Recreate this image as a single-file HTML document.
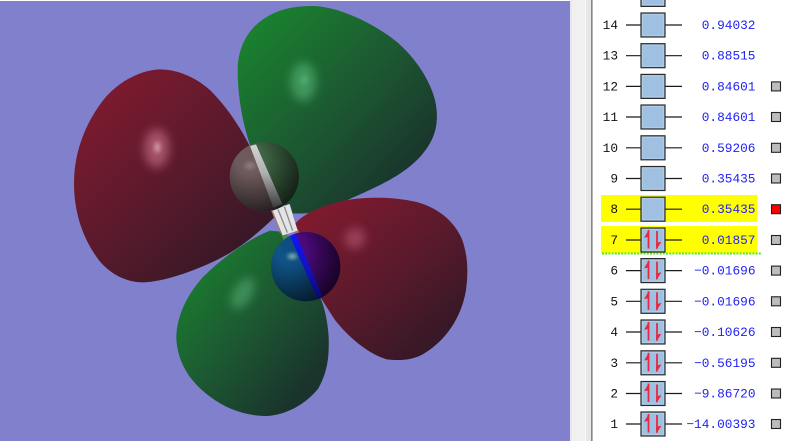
<!DOCTYPE html>
<html><head><meta charset="utf-8"><style>
html,body{margin:0;padding:0;background:#fff;width:800px;height:441px;overflow:hidden}
svg{display:block}
.n{font:12.8px "Liberation Mono",monospace;fill:#111;text-anchor:end}
.v{font:12.8px "Liberation Mono",monospace;fill:#2222f4;text-anchor:end}
</style></head><body>
<svg width="800" height="441" viewBox="0 0 800 441" xmlns="http://www.w3.org/2000/svg">
<defs>
<linearGradient id="g" x1="0.1" y1="0.1" x2="0.85" y2="0.85"><stop offset="0" stop-color="#1a802e"/><stop offset="0.5" stop-color="#1c5a32"/><stop offset="1" stop-color="#1a332c"/></linearGradient>
<linearGradient id="r" x1="0.15" y1="0.1" x2="0.85" y2="0.9"><stop offset="0" stop-color="#7d1a2e"/><stop offset="0.5" stop-color="#5a1a2c"/><stop offset="1" stop-color="#341826"/></linearGradient>
<linearGradient id="c" gradientUnits="userSpaceOnUse" x1="517" y1="570" x2="709" y2="490"><stop offset="0" stop-color="#6e5a5c"/><stop offset="0.5" stop-color="#6e5a5c"/><stop offset="0.5" stop-color="#3f6544"/><stop offset="1" stop-color="#3a5e40"/></linearGradient>
<linearGradient id="nn" gradientUnits="userSpaceOnUse" x1="641" y1="840" x2="833" y2="760"><stop offset="0" stop-color="#10588c"/><stop offset="0.5" stop-color="#0e4c80"/><stop offset="0.5" stop-color="#4e0a80"/><stop offset="1" stop-color="#3e0864"/></linearGradient>
<radialGradient id="shade" cx="0.3" cy="0.25" r="0.85"><stop offset="0.25" stop-color="#000" stop-opacity="0"/><stop offset="1" stop-color="#000" stop-opacity="0.72"/></radialGradient>
<linearGradient id="bandc" x1="0" y1="0" x2="0" y2="1"><stop offset="0" stop-color="#d4d4d4"/><stop offset="0.45" stop-color="#b0b0b0"/><stop offset="1" stop-color="#3a3a3a"/></linearGradient>
<linearGradient id="bandn" x1="0" y1="0" x2="0" y2="1"><stop offset="0" stop-color="#1414f4"/><stop offset="0.55" stop-color="#1212c0"/><stop offset="1" stop-color="#08086c"/></linearGradient>
<filter id="b" x="-60%" y="-60%" width="220%" height="220%"><feGaussianBlur stdDeviation="14"/></filter>
<filter id="b2" x="-60%" y="-60%" width="220%" height="220%"><feGaussianBlur stdDeviation="6"/></filter>
<g id="box">
<rect x="641" y="-12" width="24" height="24" fill="#9fc0e0" stroke="#2a2a2a" stroke-width="1.2"/>
<rect x="642.5" y="-10.500" width="21" height="21" fill="none" stroke="#b4d0ea" stroke-width="0.8"/>
</g>
<g id="arr" fill="#e8283c" stroke="#e8283c">
<path d="M648.5 8.500V-10" fill="none" stroke-width="1.800"/>
<path d="M649 -10L644.500 -2.500L649 -3.500Z" stroke-width="0.500"/>
<path d="M657 -9V8.500" fill="none" stroke-width="1.800"/>
<path d="M656.500 9L661 2L656.500 3Z" stroke-width="0.500"/>
</g>
<g id="chk"><rect x="771.5" y="-4.5" width="9" height="9" fill="#bcbcbc" stroke="#222" stroke-width="1.1"/></g>
<g id="chkr"><rect x="771.5" y="-4.5" width="9" height="9" fill="#ff0000" stroke="#222" stroke-width="1.1"/></g>
</defs>

<rect width="800" height="441" fill="#fff"/>
<rect x="0" y="1" width="570" height="440" fill="#8080cc"/>
<rect x="570" y="0" width="2" height="441" fill="#e6e6f6"/>
<rect x="572" y="0" width="13" height="441" fill="#f0f0f0"/>
<rect x="585" y="0" width="1" height="441" fill="#fafafa"/>
<rect x="586" y="0" width="5" height="441" fill="#e6e8e8"/>
<rect x="591" y="0" width="1.6" height="441" fill="#858585"/>

<g transform="translate(60,0) scale(0.33333)">
<path fill="url(#g)" d="M570 435C548 370 533 290 533 210C533 130 575 70 640 40C680 22 720 18 760 18C830 20 920 60 990 110C1060 160 1110 240 1125 300C1135 345 1132 385 1115 420C1085 480 1030 520 960 555C900 585 840 610 790 628C760 640 730 642 690 640Z"/>
<path fill="url(#r)" d="M570 440C540 380 500 320 450 270C405 230 350 208 300 208C240 210 175 245 130 300C80 365 42 450 42 550C42 640 70 720 120 785C155 825 200 847 250 847C310 845 400 815 480 775C540 745 600 695 645 650Z"/>
<path fill="url(#r)" d="M705 672C730 640 790 615 860 600C920 590 1000 590 1070 606C1130 622 1180 660 1205 715C1222 760 1226 810 1218 870C1205 950 1160 1020 1090 1062C1055 1082 1015 1082 980 1078C920 1060 860 1005 825 960C805 930 790 905 780 890L720 760Z"/>
<path fill="url(#g)" d="M630 692C570 715 490 770 430 830C385 880 349 945 349 1015C352 1090 395 1150 450 1190C500 1228 560 1248 620 1248C680 1245 740 1210 775 1165C800 1120 808 1080 806 1010C802 950 790 915 780 890L700 730L660 695Z"/>

<ellipse cx="730" cy="245" rx="38" ry="58" fill="#5fc083" opacity="0.55" filter="url(#b)"/>
<ellipse cx="733" cy="240" rx="10" ry="14" fill="#70c890" opacity="0.4" filter="url(#b2)"/>
<ellipse cx="290" cy="445" rx="38" ry="58" fill="#c87088" opacity="0.65" filter="url(#b)"/>
<ellipse cx="292" cy="442" rx="9" ry="16" fill="#e8b8c4" opacity="0.7" filter="url(#b2)"/>
<ellipse cx="885" cy="715" rx="32" ry="30" fill="#b85a78" opacity="0.6" filter="url(#b)" transform="rotate(-40 885 715)"/>
<ellipse cx="548" cy="880" rx="28" ry="52" fill="#62b880" opacity="0.5" filter="url(#b)" transform="rotate(30 548 880)"/>

<path d="M640 640L690 612L715 700L668 712Z" fill="#8080cc"/>
<path d="M632 628L650 634L672 690L660 700Z" fill="#a07a7a"/>
<path d="M658 692L690 708L672 722Z" fill="#4f8a55"/>
<path d="M700 665L720 700L705 706Z" fill="#a06a70"/>
<path d="M638 632L688 612L713 692L668 706Z" fill="#e4e4e4"/>
<g fill="none" stroke-width="4" stroke="#8c8c8c">
<path d="M654 628L682 698"/>
<path d="M673 620L698 692"/>
</g>

<circle cx="613" cy="530" r="104" fill="url(#c)"/>
<circle cx="613" cy="530" r="104" fill="url(#shade)"/>
<ellipse cx="570" cy="497" rx="16" ry="10" fill="#a89898" opacity="0.6" filter="url(#b2)"/>
<path d="M570 438L588 433L667 612L640 623Z" fill="url(#bandc)"/>

<circle cx="737" cy="800" r="104" fill="url(#nn)"/>
<circle cx="737" cy="800" r="104" fill="url(#shade)"/>
<ellipse cx="697" cy="769" rx="14" ry="7" fill="#a8d8c8" opacity="0.9" filter="url(#b2)"/>
<path d="M690 708L708 702L787 888L772 896Z" fill="url(#bandn)"/>
</g>

<rect x="601" y="195" width="156.500" height="27" fill="#ffff00"/>
<rect x="601" y="226" width="156.500" height="27" fill="#ffff00"/>
<path d="M602 253.500H762" stroke="#44ee22" stroke-width="2" stroke-dasharray="2 1.200"/>

<g stroke="#1a1a1a" stroke-width="1.200">
<path d="M626 25H682M626 55.700H682M626 86.400H682M626 117H682M626 147.800H682M626 178.500H682M626 209.200H682M626 240H682M626 270.600H682M626 301.300H682M626 332H682M626 362.800H682M626 393.500H682M626 424H682"/>
</g>

<use href="#box" y="-5.600"/>
<use href="#box" y="25"/>
<use href="#box" y="55.700"/>
<use href="#box" y="86.400"/>
<use href="#box" y="117"/>
<use href="#box" y="147.800"/>
<use href="#box" y="178.500"/>
<use href="#box" y="209.200"/>
<use href="#box" y="240"/>
<use href="#box" y="270.600"/>
<use href="#box" y="301.300"/>
<use href="#box" y="332"/>
<use href="#box" y="362.800"/>
<use href="#box" y="393.500"/>
<use href="#box" y="424"/>

<use href="#arr" y="240"/>
<use href="#arr" y="270.600"/>
<use href="#arr" y="301.300"/>
<use href="#arr" y="332"/>
<use href="#arr" y="362.800"/>
<use href="#arr" y="393.500"/>
<use href="#arr" y="424"/>

<text class="n" x="618" y="29">14</text><text class="v" x="755.500" y="29">0.94032</text>
<text class="n" x="618" y="59.700">13</text><text class="v" x="755.500" y="59.700">0.88515</text>
<text class="n" x="618" y="90.400">12</text><text class="v" x="755.500" y="90.400">0.84601</text>
<text class="n" x="618" y="121">11</text><text class="v" x="755.500" y="121">0.84601</text>
<text class="n" x="618" y="151.800">10</text><text class="v" x="755.500" y="151.800">0.59206</text>
<text class="n" x="618" y="182.500">9</text><text class="v" x="755.500" y="182.500">0.35435</text>
<text class="n" x="618" y="213.200">8</text><text class="v" x="755.500" y="213.200">0.35435</text>
<text class="n" x="618" y="244">7</text><text class="v" x="755.500" y="244">0.01857</text>
<text class="n" x="618" y="274.600">6</text><text class="v" x="755.500" y="274.600">−0.01696</text>
<text class="n" x="618" y="305.300">5</text><text class="v" x="755.500" y="305.300">−0.01696</text>
<text class="n" x="618" y="336">4</text><text class="v" x="755.500" y="336">−0.10626</text>
<text class="n" x="618" y="366.800">3</text><text class="v" x="755.500" y="366.800">−0.56195</text>
<text class="n" x="618" y="397.500">2</text><text class="v" x="755.500" y="397.500">−9.86720</text>
<text class="n" x="618" y="428">1</text><text class="v" x="755.500" y="428">−14.00393</text>

<use href="#chk" y="86.400"/>
<use href="#chk" y="117"/>
<use href="#chk" y="147.800"/>
<use href="#chk" y="178.500"/>
<use href="#chkr" y="209.200"/>
<use href="#chk" y="240"/>
<use href="#chk" y="270.600"/>
<use href="#chk" y="301.300"/>
<use href="#chk" y="332"/>
<use href="#chk" y="362.800"/>
<use href="#chk" y="393.500"/>
<use href="#chk" y="424"/>
</svg>
</body></html>
